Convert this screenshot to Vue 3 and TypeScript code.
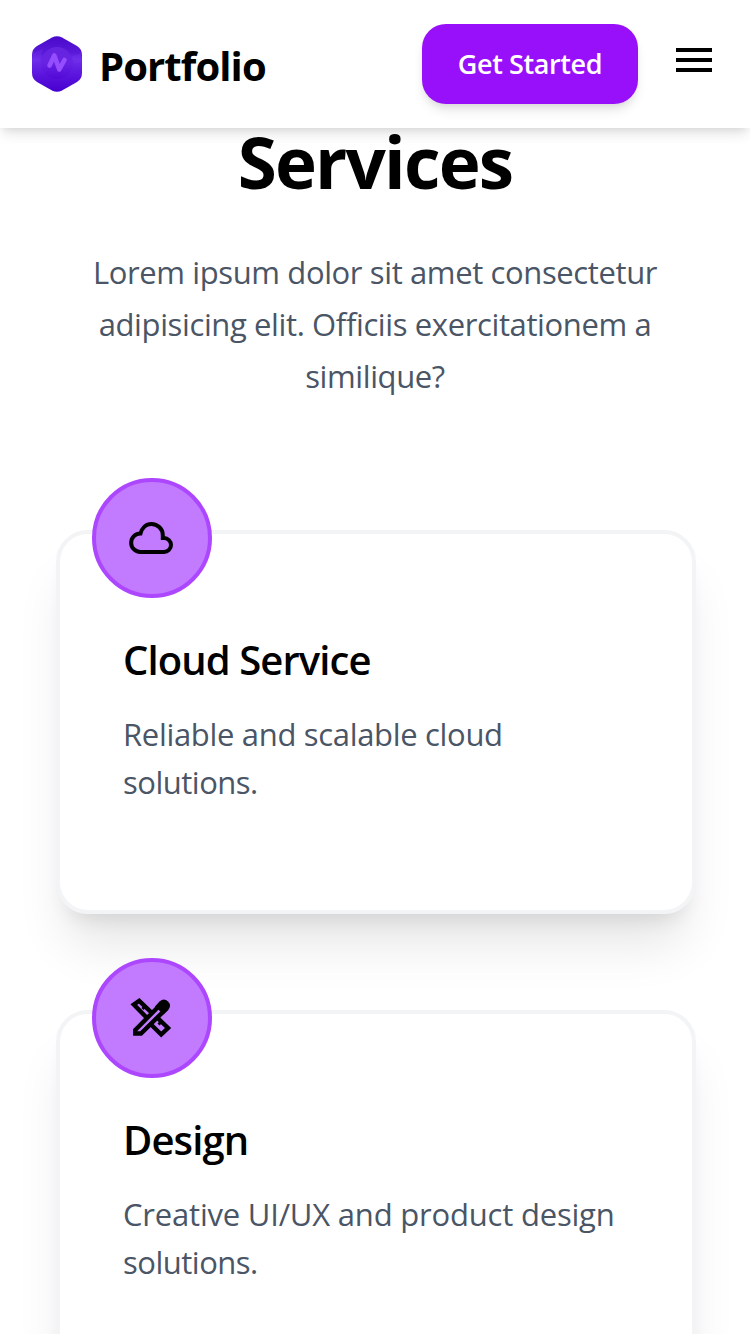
<script setup lang="ts">
interface Service {
  title: string
  lines: string[]
  key: 'cloud' | 'design'
}

const intro: string[] = [
  'Lorem ipsum dolor sit amet consectetur',
  'adipisicing elit. Officiis exercitationem a',
  'similique?',
]

const services: Service[] = [
  { key: 'cloud', title: 'Cloud Service', lines: ['Reliable and scalable cloud', 'solutions.'] },
  { key: 'design', title: 'Design', lines: ['Creative UI/UX and product design', 'solutions.'] },
]
</script>

<template>
  <div class="page">
    <header class="navbar">
      <div class="brand">
        <svg class="logo" viewBox="0 0 50 56" aria-hidden="true">
          <defs>
            <linearGradient id="hex" x1="0" y1="0" x2="0" y2="1">
              <stop offset="0" stop-color="#4a08cc" />
              <stop offset=".3" stop-color="#5a18d8" />
              <stop offset=".42" stop-color="#6e2ce9" />
              <stop offset=".7" stop-color="#5b14dd" />
              <stop offset="1" stop-color="#4600cf" />
            </linearGradient>
            <linearGradient id="disc" x1="0" y1="0" x2="0" y2="1">
              <stop offset="0" stop-color="#6524de" />
              <stop offset=".5" stop-color="#6823e3" />
              <stop offset="1" stop-color="#5208d8" />
            </linearGradient>
          </defs>
          <path d="M20 1.500Q25-1 30 1.500L45 10Q50 13 50 19V37Q50 43 45 46L30 54.500Q25 57 20 54.500L5 46Q0 43 0 37V19Q0 13 5 10Z" fill="url(#hex)" />
          <path d="M1 17L11 13L8 24L0 28ZM49 17L39 21L42 27L50 27Z" fill="#7434ed" opacity=".35" />
          <circle cx="25" cy="27" r="16" fill="url(#disc)" />
          <path d="M17.500 29.500L22.300 19.500L27.300 33.500L32.500 24" fill="none" stroke="#964dff" stroke-width="4.600" stroke-linecap="round" stroke-linejoin="round" />
        </svg>
        <span class="brand-name">Portfolio</span>
      </div>
      <div class="actions">
        <button class="cta" type="button">Get Started</button>
        <button class="menu" type="button" aria-label="Menu">
          <svg viewBox="0 0 36 24"><path d="M0 0H36V4H0ZM0 10H36V14H0ZM0 20H36V24H0Z" /></svg>
        </button>
      </div>
    </header>

    <main class="services">
      <h1 class="heading">Services</h1>
      <p class="intro"><span v-for="line in intro" :key="line">{{ line }}</span></p>
      <section class="cards">
        <article v-for="s in services" :key="s.key" class="card" :class="s.key">
          <div class="badge">
            <svg v-if="s.key === 'cloud'" class="icon" viewBox="0 0 48 48">
              <path d="M12.300 38A9.250 9.250 0 0 1 12.500 19.500C14 14 18 10 23.300 10C29.800 10 34.800 15 34.800 21V24H36A7 7 0 0 1 36 38Z" fill="none" stroke="#000" stroke-width="4" />
            </svg>
            <svg v-else class="icon" viewBox="0 0 48 48" fill="none" stroke="#000" stroke-width="4.400">
              <path d="M19 24L5.800 10.600L11.200 6.800L24 19M28 22.500L40 34L33.200 40.500L21.500 29" />
              <path d="M17.500 12L14.500 15M33.500 27.500L30.500 30.500" stroke-width="3" />
              <path d="M7.300 36L32.500 10.500L37.500 15.500L13 39.500H7.300Z" fill="#c27aff" />
              <path d="M27 12.500L31.500 7.500Q36 3.500 40 7.500Q44 11.500 40 16L35.500 20.500Z" fill="#000" stroke="none" />
            </svg>
          </div>
          <h2 class="title">{{ s.title }}</h2>
          <p class="text"><span v-for="line in s.lines" :key="line">{{ line }}</span></p>
        </article>
      </section>
    </main>
  </div>
</template>

<style>
html,
body {
  margin: 0;
  background: #fff;
  overflow: hidden;
}
</style>

<style scoped>
.page {
  width: 750px;
  height: 1334px;
  overflow: hidden;
  background: #fff;
  color: #000;
  font-family: "Open Sans", "Noto Sans", sans-serif;
}
.navbar {
  box-sizing: border-box;
  position: relative;
  z-index: 10;
  height: 128px;
  padding: 0 32px;
  display: flex;
  align-items: center;
  justify-content: space-between;
  background: #fff;
  box-shadow: 0 8px 12px -2px rgba(0, 0, 0, 0.1), 0 4px 8px -4px rgba(0, 0, 0, 0.1);
}
.brand {
  display: flex;
  align-items: center;
  gap: 17px;
}
.logo {
  width: 50px;
  height: 56px;
}
.brand-name {
  padding-top: 3px;
  font-size: 40px;
  font-weight: 700;
  line-height: 56px;
  letter-spacing: -0.9px;
}
.actions {
  display: flex;
  align-items: center;
  gap: 32px;
}
.cta {
  width: 216px;
  height: 80px;
  padding: 0;
  border: 0;
  border-radius: 24px;
  background: #980ffa;
  color: #fff;
  font: 600 27px/40px "Open Sans", sans-serif;
  letter-spacing: -0.4px;
  white-space: nowrap;
  box-shadow: 0 8px 12px -2px rgba(0, 0, 0, 0.1), 0 4px 8px -4px rgba(0, 0, 0, 0.1);
}
.menu {
  width: 48px;
  height: 56px;
  padding: 12px 6px 20px;
  border: 0;
  background: none;
}
.menu svg {
  display: block;
  width: 36px;
  height: 24px;
}
.heading {
  margin: 0;
  height: 72px;
  font-size: 71px;
  line-height: 68px;
  font-weight: 700;
  text-align: center;
  letter-spacing: -1.8px;
}
.intro {
  margin: 46px 0 0;
  text-align: center;
  font-size: 31px;
  line-height: 52px;
  letter-spacing: -0.38px;
  color: #4a5565;
}
.intro span,
.text span {
  display: block;
  white-space: nowrap;
}
.cards {
  margin: 128px 54px 0 56px;
  display: grid;
  gap: 96px;
}
.card {
  box-sizing: border-box;
  position: relative;
  width: 640px;
  height: 384px;
  padding: 98px 63px 0;
  border: 4px solid #f3f4f6;
  border-radius: 32px;
  background: #fff;
  box-shadow: 0 40px 50px -10px rgba(0, 0, 0, 0.1), 0 16px 20px -12px rgba(0, 0, 0, 0.1);
}
.badge {
  box-sizing: border-box;
  position: absolute;
  top: -56px;
  left: 32px;
  width: 120px;
  height: 120px;
  border: 4px solid #ad46ff;
  border-radius: 50%;
  background: #c27aff;
  display: flex;
  align-items: center;
  justify-content: center;
}
.icon {
  width: 48px;
  height: 48px;
}
.title {
  margin: 0;
  font-size: 40px;
  line-height: 56px;
  font-weight: 600;
  letter-spacing: -0.9px;
}
.text {
  margin: 22px 0 0;
  font-size: 31px;
  line-height: 48px;
  letter-spacing: -0.32px;
  color: #4a5565;
}
.design .text {
  letter-spacing: -0.2px;
}
.text span + span {
  letter-spacing: -0.5px;
}
</style>
